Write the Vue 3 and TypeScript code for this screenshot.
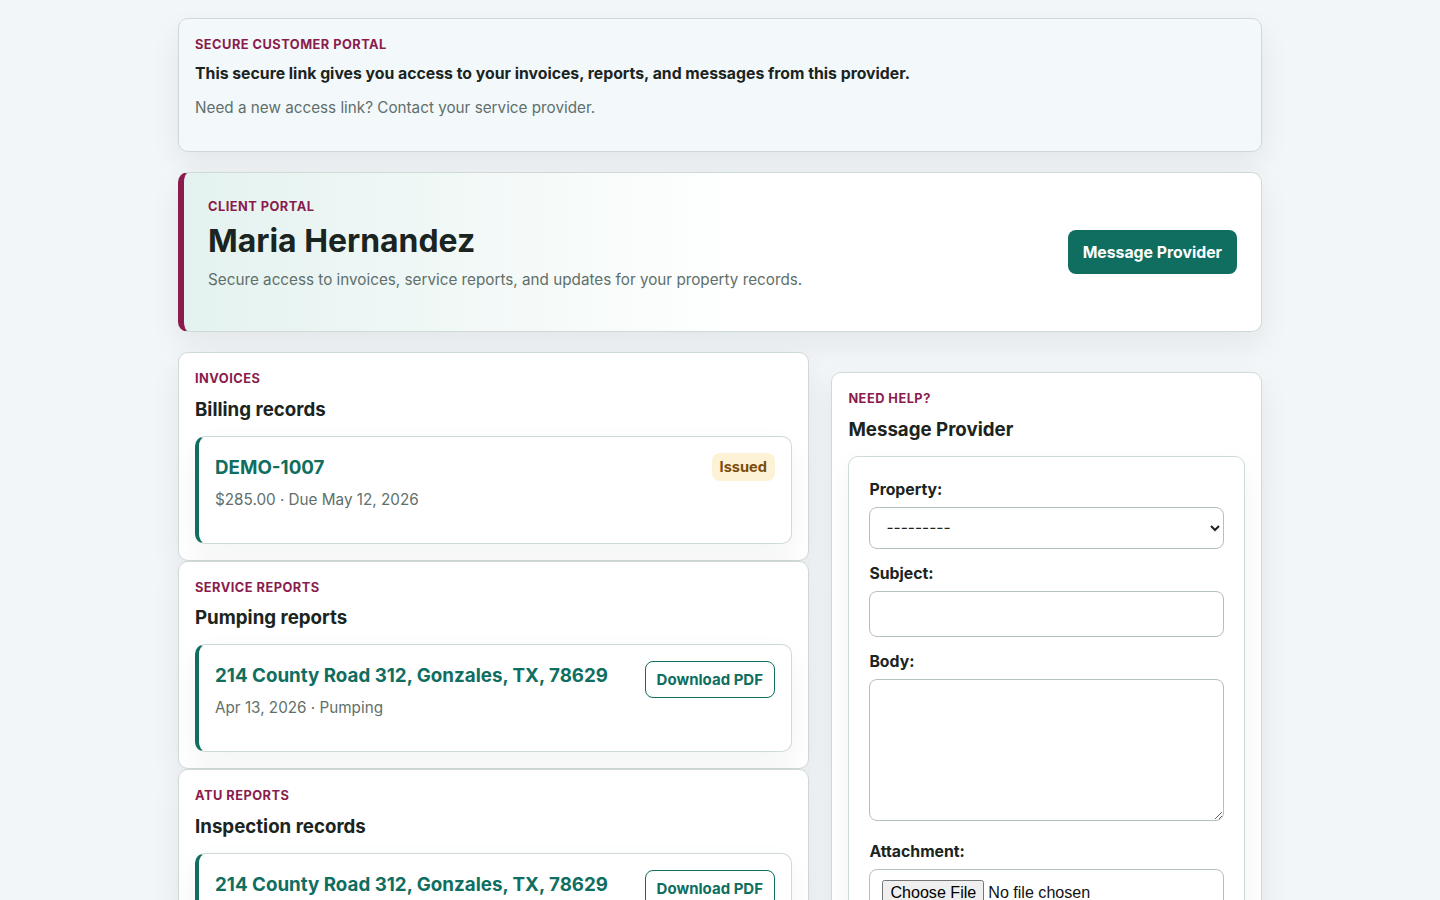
<script setup lang="ts">
interface RecordSection {
  eyebrow: string;
  title: string;
  name: string;
  meta?: string;
}

const reportSections: RecordSection[] = [
  {
    eyebrow: "SERVICE REPORTS",
    title: "Pumping reports",
    name: "214 County Road 312, Gonzales, TX, 78629",
    meta: "Apr 13, 2026 · Pumping",
  },
  {
    eyebrow: "ATU REPORTS",
    title: "Inspection records",
    name: "214 County Road 312, Gonzales, TX, 78629",
  },
];
</script>

<template>
  <div class="page">
    <section class="card banner">
      <div class="eyebrow">SECURE CUSTOMER PORTAL</div>
      <p class="banner__lead">This secure link gives you access to your invoices, reports, and messages from this provider.</p>
      <p class="muted">Need a new access link? Contact your service provider.</p>
    </section>

    <section class="card hero">
      <div class="hero__text">
        <div class="eyebrow">CLIENT PORTAL</div>
        <h1 class="hero__name">Maria Hernandez</h1>
        <p class="muted">Secure access to invoices, service reports, and updates for your property records.</p>
      </div>
      <a class="btn-primary">Message Provider</a>
    </section>

    <div class="columns">
      <div class="stack">
        <section class="card panel">
          <div class="eyebrow">INVOICES</div>
          <h2 class="panel__title">Billing records</h2>
          <div class="record">
            <div>
              <a class="record__name">DEMO-1007</a>
              <p class="muted record__meta">$285.00 · Due May 12, 2026</p>
            </div>
            <span class="badge">Issued</span>
          </div>
        </section>

        <section v-for="section in reportSections" :key="section.eyebrow" class="card panel">
          <div class="eyebrow">{{ section.eyebrow }}</div>
          <h2 class="panel__title">{{ section.title }}</h2>
          <div class="record">
            <div>
              <a class="record__name">{{ section.name }}</a>
              <p v-if="section.meta" class="muted record__meta">{{ section.meta }}</p>
            </div>
            <a class="btn-outline">Download PDF</a>
          </div>
        </section>
      </div>

      <aside class="card panel side">
        <div class="eyebrow">NEED HELP?</div>
        <h2 class="panel__title">Message Provider</h2>
        <form class="form" @submit.prevent>
          <label class="form__label" for="property">Property:</label>
          <select id="property" class="field field--select">
            <option>---------</option>
          </select>
          <label class="form__label" for="subject">Subject:</label>
          <input id="subject" class="field field--input" type="text" />
          <label class="form__label" for="body">Body:</label>
          <textarea id="body" class="field field--area"></textarea>
          <label class="form__label" for="attachment">Attachment:</label>
          <input id="attachment" class="field field--file" type="file" />
        </form>
      </aside>
    </div>
  </div>
</template>

<style>
html,
body {
  margin: 0;
  background: #f3f6f9;
}
</style>

<style scoped>
.page {
  box-sizing: border-box;
  width: 1084px;
  margin: 0 auto;
  padding: 18px 0 40px;
  font-family: Inter, "Liberation Sans", sans-serif;
  color: #1a2421;
}

.card {
  box-sizing: border-box;
  background: #fff;
  border: 1px solid #cfdad8;
  border-radius: 10px;
  box-shadow: 0 12px 30px rgba(24, 35, 33, 0.07);
}

.eyebrow {
  font-size: 12.8px;
  line-height: 15.6px;
  font-weight: 700;
  letter-spacing: 0.48px;
  color: #8a1c4d;
}

.muted {
  margin: 0;
  font-size: 15.25px;
  line-height: 24px;
  color: #5f6f6b;
}

.banner {
  height: 134px;
  padding: 18px 16px 0;
  background: #f3f8fb;
}

.banner__lead {
  margin: 9px 0 10px;
  font-size: 15.8px;
  line-height: 24px;
  font-weight: 700;
}

.hero {
  display: flex;
  align-items: center;
  justify-content: space-between;
  height: 160px;
  margin-top: 20px;
  padding: 0 24px;
  border-left: 6px solid #8a1c4d;
  background: linear-gradient(90deg, #e4f2ef 0%, #fff 52%);
}

.hero__text {
  align-self: flex-start;
  padding-top: 26px;
}

.hero__name {
  margin: 7px 0 8px;
  font-size: 31.9px;
  line-height: 38px;
  font-weight: 700;
}

.btn-primary {
  display: block;
  padding: 13px 15px 11px;
  font-size: 15.8px;
  line-height: 20px;
  font-weight: 700;
  color: #fff;
  background: #0f6e60;
  border-radius: 8px;
}

.columns {
  display: grid;
  grid-template-columns: 631px 430.6px;
  gap: 22.4px;
  align-items: start;
  margin-top: 20px;
}

.side {
  margin-top: 20px;
}

.panel {
  padding: 18px 16px 16px;
}

.panel__title {
  margin: 11.3px 0 13.7px;
  font-size: 18.7px;
  line-height: 24px;
  font-weight: 700;
}

.record {
  display: flex;
  justify-content: space-between;
  align-items: flex-start;
  height: 108px;
  box-sizing: border-box;
  padding: 16px 16px 0 16px;
  background: #fff;
  border: 1px solid #cfdad8;
  border-left: 4px solid #0f6e60;
  border-radius: 10px;
  box-shadow: 0 12px 30px rgba(24, 35, 33, 0.05);
}

.record__name {
  display: block;
  margin-top: 1px;
  font-size: 18.76px;
  line-height: 28px;
  font-weight: 700;
  color: #0f6e60;
}

.record__meta {
  margin-top: 6px;
}

.badge {
  padding: 4px 8px;
  font-size: 14.6px;
  line-height: 20px;
  font-weight: 700;
  color: #7a4d0b;
  background: #fdf1d6;
  border-radius: 8px;
}

.btn-outline {
  padding: 8px 11px;
  font-size: 15px;
  line-height: 19px;
  font-weight: 700;
  color: #0f6e60;
  background: #fff;
  border: 1px solid #0f6e60;
  border-radius: 8px;
}

.form {
  padding: 23px 20px 20px;
  border: 1px solid #cfdad8;
  border-radius: 10px;
  box-shadow: 0 12px 30px rgba(24, 35, 33, 0.05);
}

.form__label {
  display: block;
  margin-bottom: 7px;
  font-size: 15.8px;
  line-height: 20px;
  font-weight: 700;
}

.field {
  display: block;
  box-sizing: border-box;
  width: 100%;
  margin-bottom: 15px;
  background: #fff;
  border: 1px solid #b4c0be;
  border-radius: 8px;
  outline: none;
}

.field--select {
  height: 42px;
  padding: 0 12px;
  font-family: Inter, sans-serif;
  font-size: 15.5px;
  color: #1a2421;
}

.field--input {
  height: 46px;
}

.field--area {
  height: 142px;
  margin-bottom: 21px;
}

.field--file {
  height: 46px;
  padding: 10px 12px;
  font-family: "Liberation Sans", Arial, sans-serif;
  font-size: 16.1px;
  color: #111;
}
</style>
